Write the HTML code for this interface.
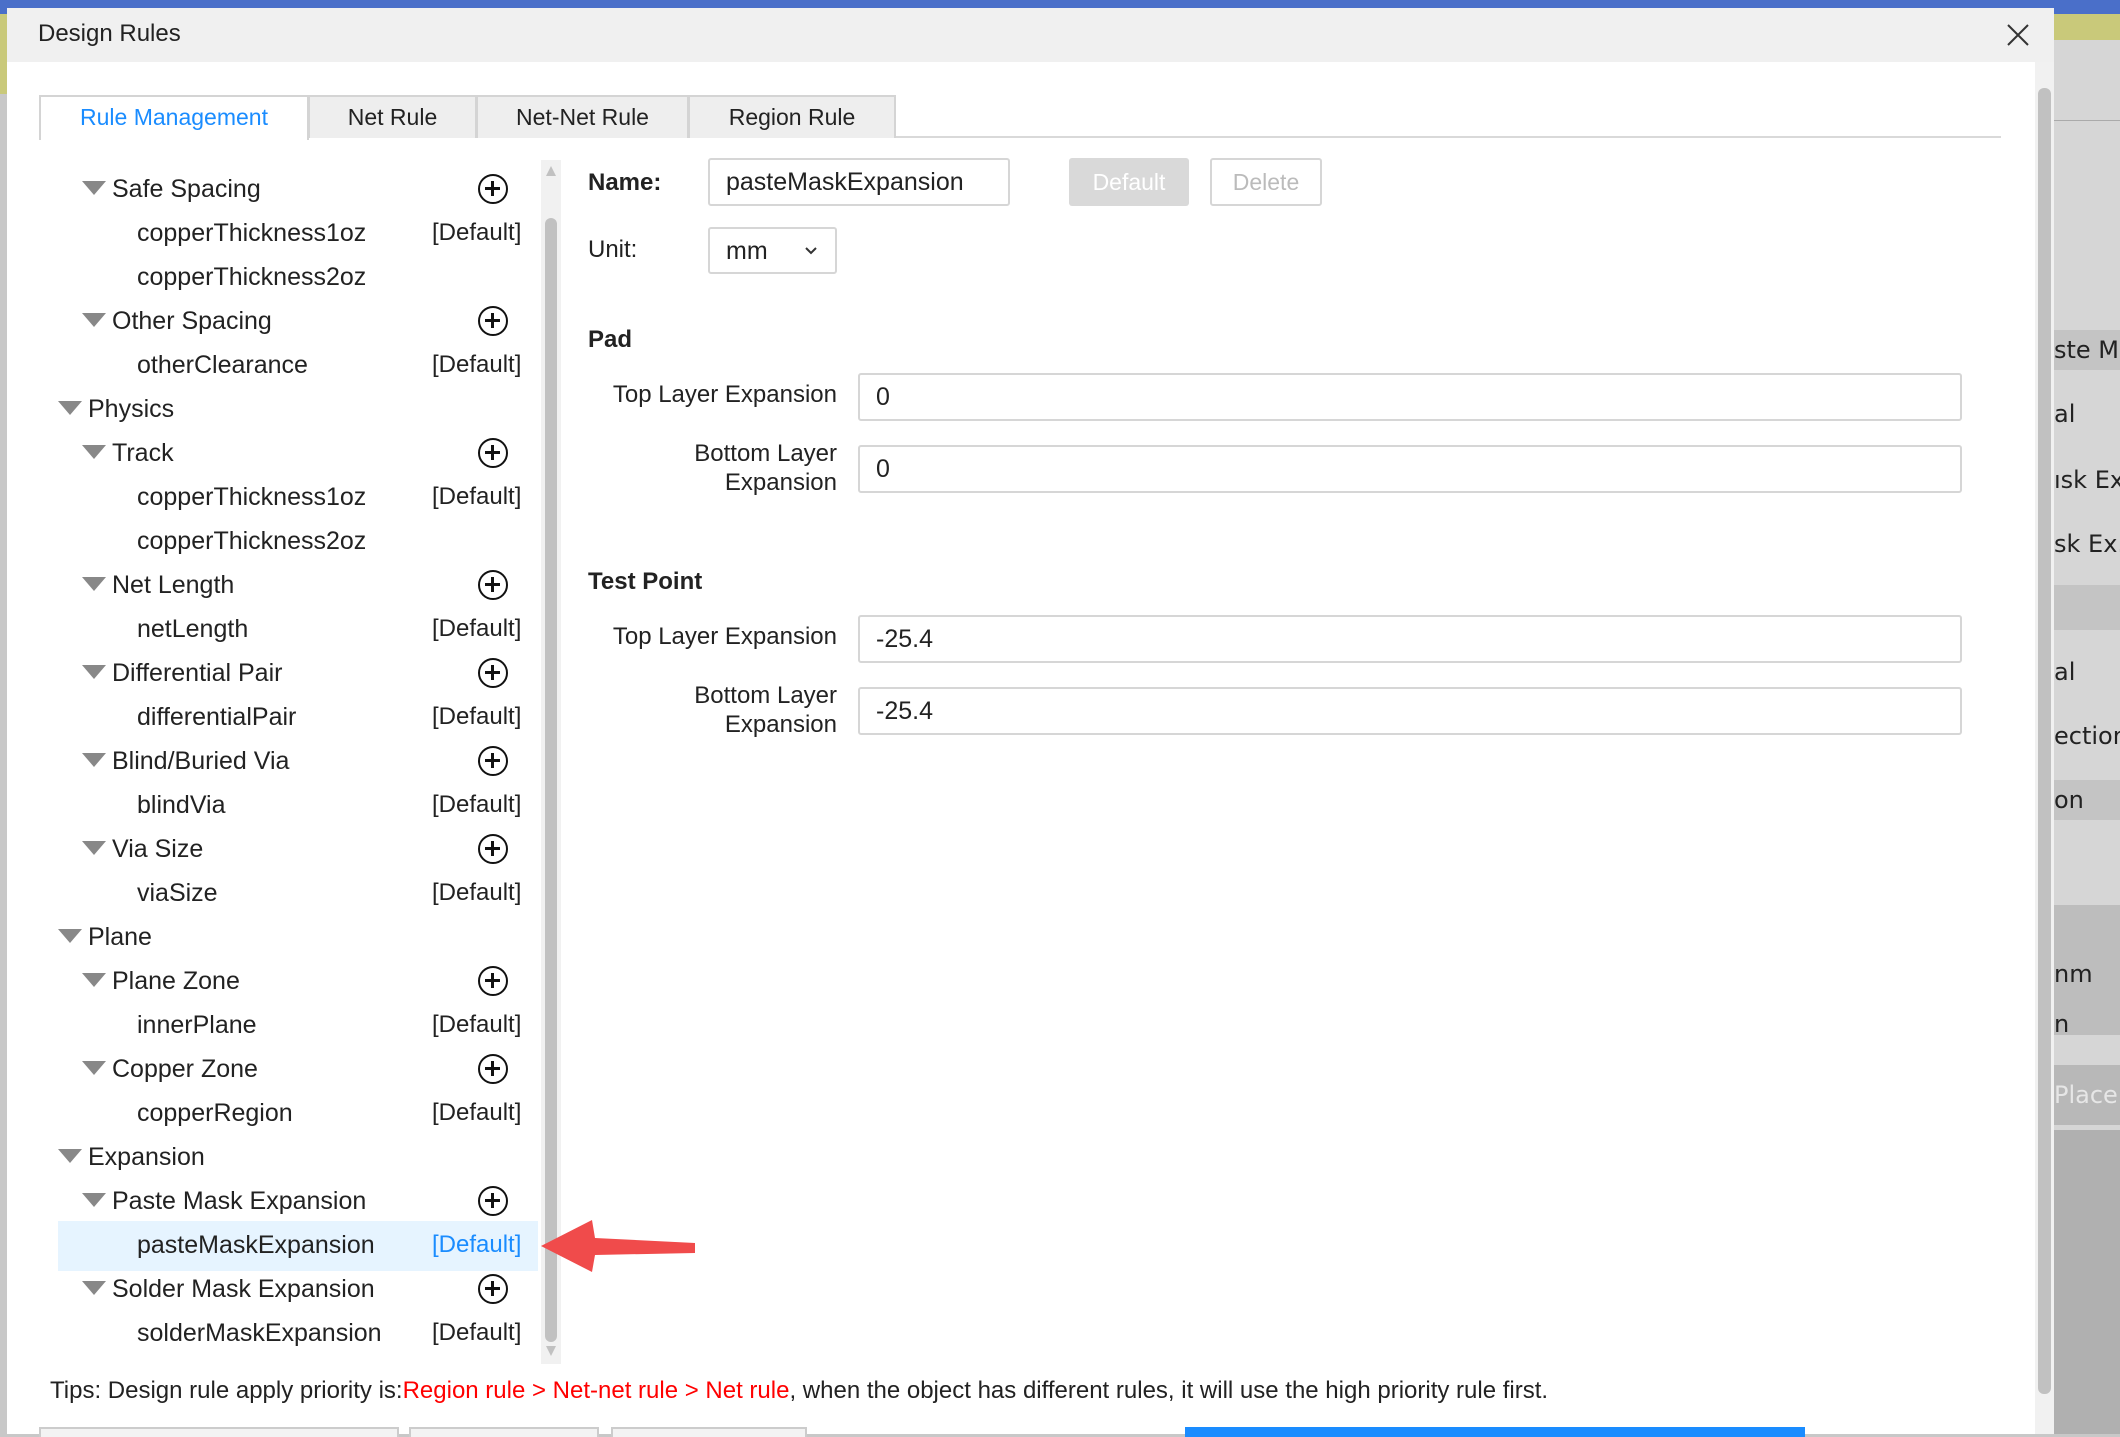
<!DOCTYPE html>
<html><head><meta charset="utf-8"><style>
*{margin:0;padding:0;box-sizing:border-box}
body{width:2120px;height:1434px;overflow:hidden;position:relative;background:#c8c8c8;font-family:"Liberation Sans","Noto Sans CJK SC",sans-serif;color:#222}
.abs{position:absolute;white-space:nowrap}
.dlg{left:7px;top:8px;width:2047px;height:1426px;background:#fff}
.title{left:0;top:0;width:2047px;height:54px;background:#f0f0f0}
.tab{position:absolute;top:87px;height:43px;border:2px solid #d4d4d4;border-bottom:none;background:#eeeeee;font-size:23px;text-align:center;line-height:40px;color:#222}
.row{position:absolute;height:44px;line-height:44px;font-size:25px;color:#222;white-space:nowrap}
.tri{position:absolute;width:0;height:0;border-left:12px solid transparent;border-right:12px solid transparent;border-top:14px solid #888}
.plus{position:absolute;left:471px;width:30px;height:30px;border:2.5px solid #111;border-radius:50%}
.plus:before{content:"";position:absolute;left:5px;top:11px;width:15px;height:2.5px;background:#111}
.plus:after{content:"";position:absolute;left:11px;top:5px;width:2.5px;height:15px;background:#111}
.lbl{position:absolute;font-size:24px;color:#222;white-space:nowrap}
.inp{position:absolute;border:2px solid #d6d6d6;border-radius:3px;background:#fff;font-size:25px;padding-left:16px;color:#222}
.rs{position:absolute;left:2054px;font-size:24px;font-family:'DejaVu Sans',sans-serif;white-space:nowrap;overflow:hidden;width:66px}
</style></head><body>
<div class="abs" style="left:0;top:0;width:2120px;height:14px;background:#4a6fc9"></div>
<div class="abs" style="left:0;top:14px;width:10px;height:80px;background:#c9c97a"></div>
<div class="abs" style="left:2054px;top:14px;width:66px;height:26px;background:#c9c97a"></div>
<div class="abs" style="left:2054px;top:40px;width:66px;height:1394px;background:#d6d6d6"></div>
<div class="abs" style="left:2054px;top:120px;width:66px;height:1px;background:#aaa"></div>
<div class="rs" style="top:330px;height:40px;background:#c4c4c4;line-height:40px">ste Mas</div>
<div class="rs" style="top:400px">al</div>
<div class="rs" style="top:466px">ısk Ex.</div>
<div class="rs" style="top:530px">sk Ex..</div>
<div class="abs" style="left:2054px;top:585px;width:66px;height:45px;background:#c4c4c4"></div>
<div class="rs" style="top:658px">al</div>
<div class="rs" style="top:722px">ection</div>
<div class="rs" style="top:780px;height:40px;background:#c4c4c4;line-height:40px">on</div>
<div class="abs" style="left:2054px;top:905px;width:66px;height:130px;background:#bdbdbd"></div>
<div class="rs" style="top:960px">nm</div>
<div class="rs" style="top:1010px">n</div>
<div class="rs" style="top:1065px;height:60px;background:#b8b8b8;color:#e6e6e6;line-height:60px">Place</div>
<div class="abs" style="left:2054px;top:1130px;width:66px;height:304px;background:#b0b0b0"></div>

<div class="abs dlg">
 <div class="abs title"></div>
 <div class="abs" style="left:31px;top:12px;font-size:24px;color:#222">Design Rules</div>
 <svg class="abs" style="left:1998px;top:14px" width="26" height="26"><path d="M3 3L23 23M23 3L3 23" stroke="#333" stroke-width="2"/></svg>
 <div class="abs" style="left:2028px;top:54px;width:19px;height:1372px;background:#f1f1f1"></div>
 <div class="abs" style="left:2031px;top:80px;width:13px;height:1306px;background:#c1c1c1;border-radius:6px"></div>

 <div class="abs" style="left:32px;top:128px;width:1962px;height:2px;background:#d9d9d9"></div>
 <div class="tab" style="left:32px;width:270px;background:#fff;color:#1a8cff;height:45px">Rule Management</div>
 <div class="tab" style="left:301px;width:169px">Net Rule</div>
 <div class="tab" style="left:469px;width:213px">Net-Net Rule</div>
 <div class="tab" style="left:681px;width:208px">Region Rule</div>

 <div class="abs" style="left:0;top:150px;width:540px;height:1200px;overflow:hidden">
  <div class="abs" style="left:51px;top:1063px;width:480px;height:50px;background:#e6f4ff"></div>
  <div id="tree"></div>
 </div>
 <div class="abs" style="left:534px;top:152px;width:20px;height:1204px;background:#f1f1f1"></div>
 <div class="abs" style="left:538px;top:210px;width:12px;height:1124px;background:#c1c1c1;border-radius:6px"></div>
 <svg class="abs" style="left:537px;top:156px" width="14" height="14"><path d="M7 2L12 12H2Z" fill="#c1c1c1"/></svg>
 <svg class="abs" style="left:537px;top:1336px" width="14" height="14"><path d="M7 12L12 2H2Z" fill="#c1c1c1"/></svg>

 <svg class="abs" style="left:528px;top:1208px" width="180" height="60"><path d="M6 30L57 4L60 22L160 27L160 37L60 39L57 56Z" fill="#f04b4b"/></svg>

 <div class="lbl" style="left:581px;top:161px;font-weight:bold">Name:</div>
 <div class="inp" style="left:701px;top:150px;width:302px;height:48px;line-height:44px">pasteMaskExpansion</div>
 <div class="abs" style="left:1062px;top:150px;width:120px;height:48px;background:#d9d9d9;border-radius:3px;color:#fff;font-size:23px;text-align:center;line-height:48px">Default</div>
 <div class="abs" style="left:1203px;top:150px;width:112px;height:48px;border:2px solid #d6d6d6;border-radius:3px;color:#bbb;font-size:23px;text-align:center;line-height:44px">Delete</div>
 <div class="lbl" style="left:581px;top:228px">Unit:</div>
 <div class="inp" style="left:701px;top:219px;width:129px;height:47px;line-height:44px">mm</div>
 <svg class="abs" style="left:797px;top:238px" width="14" height="10"><path d="M2 2L7 7L12 2" stroke="#333" stroke-width="2" fill="none"/></svg>

 <div class="lbl" style="left:581px;top:318px;font-weight:bold">Pad</div>
 <div class="lbl" style="left:560px;top:373px;width:270px;text-align:right">Top Layer Expansion</div>
 <div class="inp" style="left:851px;top:365px;width:1104px;height:48px;line-height:44px">0</div>
 <div class="lbl" style="left:560px;top:431px;width:270px;text-align:right;line-height:29px">Bottom Layer<br>Expansion</div>
 <div class="inp" style="left:851px;top:437px;width:1104px;height:48px;line-height:44px">0</div>

 <div class="lbl" style="left:581px;top:560px;font-weight:bold">Test Point</div>
 <div class="lbl" style="left:560px;top:615px;width:270px;text-align:right">Top Layer Expansion</div>
 <div class="inp" style="left:851px;top:607px;width:1104px;height:48px;line-height:44px">-25.4</div>
 <div class="lbl" style="left:560px;top:673px;width:270px;text-align:right;line-height:29px">Bottom Layer<br>Expansion</div>
 <div class="inp" style="left:851px;top:679px;width:1104px;height:48px;line-height:44px">-25.4</div>

 <div class="abs" style="left:43px;top:1369px;font-size:24px;color:#222;white-space:nowrap">Tips: Design rule apply priority is:<span style="color:#f00">Region rule &gt; Net-net rule &gt; Net rule</span>, when the object has different rules, it will use the high priority rule first.</div>
 <div class="abs" style="left:32px;top:1419px;width:360px;height:10px;border:2px solid #ccc;border-bottom:none;background:#f3f3f3"></div>
 <div class="abs" style="left:402px;top:1419px;width:190px;height:10px;border:2px solid #ccc;border-bottom:none;background:#f3f3f3"></div>
 <div class="abs" style="left:604px;top:1419px;width:196px;height:10px;border:2px solid #ccc;border-bottom:none;background:#f3f3f3"></div>
 <div class="abs" style="left:1178px;top:1419px;width:620px;height:10px;background:#1a8cff"></div>
</div>
<script>
(function(){
var rows=[["Spacing",1,0],["Safe Spacing",1,1],["copperThickness1oz",2,2],["copperThickness2oz",2,0],["Other Spacing",1,1],["otherClearance",2,2],["Physics",0,0],["Track",1,1],["copperThickness1oz",2,2],["copperThickness2oz",2,0],["Net Length",1,1],["netLength",2,2],["Differential Pair",1,1],["differentialPair",2,2],["Blind/Buried Via",1,1],["blindVia",2,2],["Via Size",1,1],["viaSize",2,2],["Plane",0,0],["Plane Zone",1,1],["innerPlane",2,2],["Copper Zone",1,1],["copperRegion",2,2],["Expansion",0,0],["Paste Mask Expansion",1,1],["pasteMaskExpansion",2,3],["Solder Mask Expansion",1,1],["solderMaskExpansion",2,2]];
var h="";
for(var i=0;i<rows.length;i++){var r=rows[i];var cy=189-44+44*i-8-150;var ty=cy-22;
var tx=[81,105,130][r[1]];
if(r[1]<2){h+='<div class="tri" style="left:'+(tx-30)+'px;top:'+(cy-8)+'px"></div>';}
h+='<div class="row" style="left:'+tx+'px;top:'+ty+'px">'+r[0]+'</div>';
if(r[2]==1)h+='<div class="plus" style="top:'+(cy-15)+'px"></div>';
if(r[2]>=2)h+='<div class="row" style="left:425px;top:'+ty+'px;font-size:24px;'+(r[2]==3?'color:#1a8cff':'')+'">[Default]</div>';}
document.getElementById("tree").innerHTML=h;
})();
</script>
</body></html>
